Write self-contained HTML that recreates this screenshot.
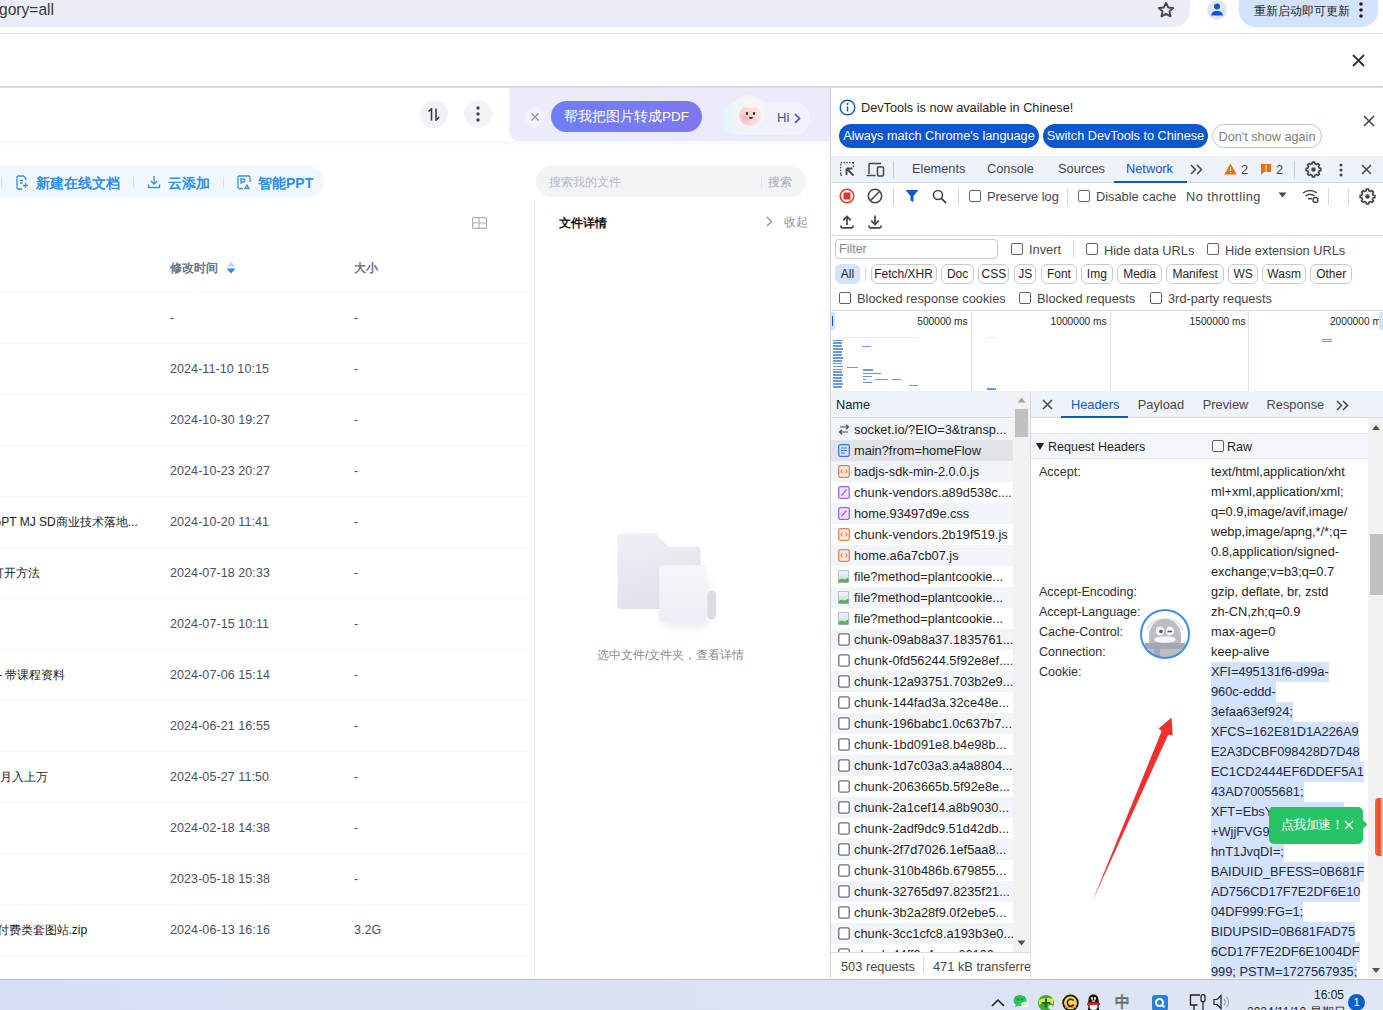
<!DOCTYPE html>
<html><head><meta charset="utf-8">
<style>
*{box-sizing:border-box;margin:0;padding:0}
html,body{width:1383px;height:1010px;overflow:hidden;background:#fff;font-family:"Liberation Sans",sans-serif;color:#1f1f1f}
.a{position:absolute}
.nw{white-space:nowrap}
/* chrome top */
#omni{left:-20px;top:-20px;width:1210px;height:47px;background:#eaedf7;border-radius:0 0 16px 0}
#upd{left:1239px;top:-20px;width:139px;height:47px;background:#d3e3fd;border-radius:0 0 16px 16px}
/* page */
.row-line{position:absolute;left:0;width:528px;height:1px;background:#f5f6f8}
.date{position:absolute;left:170px;font-size:12.5px;color:#4a5160;letter-spacing:0.08px}
.size{position:absolute;left:354px;font-size:12.5px;color:#4a5160;letter-spacing:0.08px}
.fname{position:absolute;left:0;font-size:12px;color:#222}
/* devtools */
.dt{font-size:12.5px;color:#1f1f1f}
.chk{position:absolute;width:12px;height:12px;border:1px solid #5f6368;border-radius:2px;background:#fff}
.sep{position:absolute;width:1px;background:#d4d9e1}
.chip{position:absolute;top:264px;height:20px;border:1px solid #c7c9cc;border-radius:6px;font-size:12px;line-height:18px;text-align:center;color:#1f1f1f}
.nrow{position:absolute;left:831px;width:182px;height:21px}
.nrow span{position:absolute;left:23px;top:3px;font-size:12.8px;white-space:nowrap;color:#1f1f1f}
.ico{position:absolute;left:7px;top:5px;width:11px;height:11px;border-radius:2px}
.hk{position:absolute;left:1039px;font-size:12.5px;color:#1f1f1f}
.hv{position:absolute;left:1211px;font-size:12.5px;color:#1f1f1f;white-space:nowrap}
.sel{background:#d3e3fd}
</style></head>
<body>
<!-- ===== CHROME TOP ===== -->
<div class="a" id="omni"></div>
<div class="a nw" style="left:-1px;top:1px;font-size:15.6px;color:#3a3a3a">gory=all</div>
<div class="a" id="upd"></div>
<div class="a" style="left:0;top:33px;width:1383px;height:1px;background:#dfe1e5"></div>
<div class="a" style="left:0;top:86px;width:1383px;height:3px;background:linear-gradient(#cfd0d3,#dcdde0 50%,#f3f3f5)"></div>
<!-- star -->
<svg class="a" style="left:1157px;top:1px" width="18" height="18" viewBox="0 0 24 24"><path d="M12 2.5l2.9 6.1 6.6.7-4.9 4.5 1.4 6.6L12 17.1l-6 3.3 1.4-6.6-4.9-4.5 6.6-.7z" fill="none" stroke="#474747" stroke-width="2.6" stroke-linejoin="round"/></svg>
<!-- profile -->
<div class="a" style="left:1207px;top:0px;width:20px;height:20px;border-radius:50%;background:#dde6f5"></div>
<svg class="a" style="left:1208px;top:1px" width="18" height="18" viewBox="0 0 18 18"><circle cx="9" cy="5.5" r="3" fill="#0b57d0"/><path d="M3.2 14.5c0-3 2.6-4.4 5.8-4.4s5.8 1.4 5.8 4.4z" fill="#0b57d0"/></svg>
<div class="a nw" style="left:1254px;top:3px;font-size:12px;color:#1f1f1f">重新启动即可更新</div>
<svg class="a" style="left:1357px;top:1px" width="8" height="18" viewBox="0 0 8 18"><circle cx="4" cy="3" r="1.8" fill="#1f1f1f"/><circle cx="4" cy="9" r="1.8" fill="#1f1f1f"/><circle cx="4" cy="15" r="1.8" fill="#1f1f1f"/></svg>
<svg class="a" style="left:1352px;top:54px" width="13" height="13" viewBox="0 0 13 13"><path d="M1 1L12 12M12 1L1 12" stroke="#333" stroke-width="1.8"/></svg>

<!-- ===== WEB PAGE ===== -->
<div class="a" style="left:0;top:88px;width:830px;height:890px;background:#fff;overflow:hidden">
 <!-- header purple panel -->
 <div class="a" style="left:509px;top:-10px;width:340px;height:63.5px;border-radius:0 0 0 12px;background:linear-gradient(90deg,#edecfd 0%,#ebeafc 50%,#ebebfc 100%)"></div>
 <div class="a" style="left:0;top:53px;width:830px;height:8px;background:linear-gradient(#f7f8fb,#fff)"></div>
 <!-- sort + more buttons -->
 <div class="a" style="left:420px;top:12px;width:28px;height:28px;border-radius:50%;background:#f1f2f6"></div>
 <svg class="a" style="left:427px;top:20px" width="14" height="13" viewBox="0 0 14 13"><path d="M1.5 3.5L4.5 0.8V12.5" fill="none" stroke="#3a3f4b" stroke-width="1.6"/><path d="M9 0.5V12.2L12.2 9" fill="none" stroke="#3a3f4b" stroke-width="1.6"/></svg>
 <div class="a" style="left:464px;top:12px;width:28px;height:28px;border-radius:50%;background:#f2f3f6"></div>
 <svg class="a" style="left:474px;top:16px" width="8" height="20" viewBox="0 0 8 20"><circle cx="4" cy="4" r="1.7" fill="#3b4250"/><circle cx="4" cy="10" r="1.7" fill="#3b4250"/><circle cx="4" cy="16" r="1.7" fill="#3b4250"/></svg>
 <!-- small x circle -->
 <div class="a" style="left:525px;top:19px;width:20px;height:20px;border-radius:50%;background:#f3f3fc"></div>
 <svg class="a" style="left:531px;top:25px" width="8" height="8" viewBox="0 0 8 8"><path d="M0.5 0.5L7.5 7.5M7.5 0.5L0.5 7.5" stroke="#8a8fa0" stroke-width="1.2"/></svg>
 <!-- purple button -->
 <div class="a" style="left:551px;top:13px;width:151px;height:31px;border-radius:16px;background:linear-gradient(90deg,#6f7ef7,#7f78f0)"></div>
 <div class="a nw" style="left:564px;top:20px;font-size:13.5px;color:#fff;font-weight:500">帮我把图片转成PDF</div>
 <!-- Hi pill -->
 <div class="a" style="left:722px;top:14px;width:88px;height:33px;border-radius:17px;background:linear-gradient(90deg,#e3f6fb 0%,#eef3fc 35%,#f3f1fd 100%)"></div>
 <div class="a" style="left:731px;top:7px;width:37px;height:38px;border-radius:50%;background:radial-gradient(circle at 50% 45%,#fafafa 0,#f3f3f5 60%,#e6e8f0 100%)"></div>
 <div class="a" style="left:739px;top:17px;width:22px;height:21px;border-radius:50%;background:radial-gradient(circle at 30% 60%,#f8b3bd 0,#fbd3d6 35%,#fde4e4 70%)"></div>
 <div class="a" style="left:742px;top:11px;width:17px;height:9px;border-radius:50%;background:#f6f6f8"></div>
 <div class="a" style="left:746px;top:24px;width:2px;height:3px;border-radius:1px;background:#222"></div>
 <div class="a" style="left:753px;top:24px;width:2px;height:3px;border-radius:1px;background:#222"></div>
 <div class="a" style="left:749px;top:29px;width:4px;height:2px;border-radius:0 0 2px 2px;background:#333"></div>
 <div class="a" style="left:742px;top:40px;width:17px;height:7px;border-radius:4px 4px 0 0;background:#f2f3f6"></div>
 <div class="a nw" style="left:777px;top:22px;font-size:13px;color:#3c49c4">Hi</div>
 <svg class="a" style="left:794px;top:25px" width="7" height="11" viewBox="0 0 7 11"><path d="M1 1l4.5 4.5L1 10" fill="none" stroke="#3c49c4" stroke-width="1.6"/></svg>

 <!-- toolbar pill -->
 <div class="a" style="left:-20px;top:78px;width:344px;height:32px;border-radius:16px;background:#f0f8fe"></div>
 <div class="a" style="left:1px;top:89px;width:1px;height:11px;background:#cfe3f3"></div>
 <div class="a" style="left:133px;top:89px;width:1px;height:11px;background:#cfe3f3"></div>
 <div class="a" style="left:223px;top:89px;width:1px;height:11px;background:#cfe3f3"></div>
 <svg class="a" style="left:16px;top:87px" width="13" height="15" viewBox="0 0 13 15"><path d="M10 5V3.5L7.5 1H2.2C1.5 1 1 1.5 1 2.2v10.6c0 .7.5 1.2 1.2 1.2H6" fill="none" stroke="#3a8fe0" stroke-width="1.3"/><path d="M4 5.5h3M4 8h2.5M9.5 8v5M7 10.5h5" stroke="#3a8fe0" stroke-width="1.3" fill="none"/></svg>
 <div class="a nw" style="left:36px;top:87px;font-size:14px;font-weight:bold;color:#2e8ee6">新建在线文档</div>
 <svg class="a" style="left:147px;top:87px" width="14" height="14" viewBox="0 0 14 14"><path d="M7 1v8M3.8 6L7 9.2 10.2 6M1.5 9.5v3h11v-3" fill="none" stroke="#3a8fe0" stroke-width="1.3"/></svg>
 <div class="a nw" style="left:168px;top:87px;font-size:14px;font-weight:bold;color:#2e8ee6">云添加</div>
 <svg class="a" style="left:237px;top:87px" width="14" height="15" viewBox="0 0 14 15"><path d="M6 13.5H2.2c-.7 0-1.2-.5-1.2-1.2V2.2C1 1.5 1.5 1 2.2 1h9.6c.7 0 1.2.5 1.2 1.2V7" fill="none" stroke="#3a8fe0" stroke-width="1.3"/><path d="M4 9V4h2.5a1.5 1.5 0 010 3H4M8 13.5l2-3.5 2 3.5z" fill="none" stroke="#3a8fe0" stroke-width="1.3"/></svg>
 <div class="a nw" style="left:258px;top:87px;font-size:14px;font-weight:bold;color:#2e8ee6">智能PPT</div>

 <!-- search pill -->
 <div class="a" style="left:536px;top:78px;width:270px;height:31px;border-radius:16px;background:#f2f3f7"></div>
 <div class="a nw" style="left:549px;top:86px;font-size:12px;color:#b6bac4">搜索我的文件</div>
 <div class="a" style="left:761px;top:87px;width:1px;height:13px;background:#e2e4ea"></div>
 <div class="a nw" style="left:768px;top:86px;font-size:12px;color:#a8adb8">搜索</div>

 <!-- grid icon -->
 <svg class="a" style="left:472px;top:129px" width="15" height="12" viewBox="0 0 15 12"><rect x="0.6" y="0.6" width="13.8" height="10.8" rx="1" fill="none" stroke="#aab0bb" stroke-width="1.2"/><path d="M0.6 6h13.8M7 0.6v10.8" stroke="#aab0bb" stroke-width="1.2"/></svg>

 <!-- detail panel -->
 <div class="a" style="left:534px;top:112px;width:1px;height:778px;background:#eef0f3"></div>
 <div class="a nw" style="left:559px;top:127px;font-size:12px;font-weight:bold;color:#111">文件详情</div>
 <svg class="a" style="left:766px;top:128px" width="7" height="11" viewBox="0 0 7 11"><path d="M1 1l4.5 4.5L1 10" fill="none" stroke="#8c919c" stroke-width="1.2"/></svg>
 <div class="a nw" style="left:784px;top:126px;font-size:12px;color:#8c919c">收起</div>
 <!-- empty folder illustration -->
 <svg class="a" style="left:600px;top:435px" width="130" height="110" viewBox="600 523 130 110">
  <defs>
   <linearGradient id="fb" x1="0" y1="0" x2="0.3" y2="1"><stop offset="0" stop-color="#eef0f5"/><stop offset="1" stop-color="#dfe2ea"/></linearGradient>
   <linearGradient id="ff" x1="0" y1="0" x2="0" y2="1"><stop offset="0" stop-color="#f5f6fa"/><stop offset="1" stop-color="#eceef5"/></linearGradient>
   <filter id="sh" x="-50%" y="-50%" width="200%" height="200%"><feGaussianBlur stdDeviation="4"/></filter>
  </defs>
  <path d="M621.5 533.4H655.5L668.5 546.7H696.6Q700.6 546.7 700.6 550.7V605Q700.6 609 696.6 609H621.5Q617.5 609 617.5 605V537.4Q617.5 533.4 621.5 533.4z" fill="url(#fb)"/>
  <rect x="707.3" y="590.5" width="9" height="29" rx="4.5" fill="#dcdee5"/>
  <rect x="662" y="574" width="46" height="54" rx="6" fill="#c8ccd8" opacity="0.35" filter="url(#sh)"/>
  <rect x="659" y="565.3" width="47.5" height="57" rx="4" fill="url(#ff)"/>
 </svg>
 <div class="a nw" style="left:597px;top:559px;font-size:12px;color:#878c97">选中文件/文件夹，查看详情</div>

 <!-- table header -->
 <div class="a nw" style="left:170px;top:172px;font-size:12px;font-weight:bold;color:#6b7280">修改时间</div>
 <svg class="a" style="left:226px;top:173px" width="10" height="13" viewBox="0 0 10 13"><path d="M5 0.5L9.5 5.5H0.5z" fill="#c9d9f0"/><path d="M5 12.5L9.5 7.5H0.5z" fill="#1e8ef0"/></svg>
 <div class="a nw" style="left:354px;top:172px;font-size:12px;font-weight:bold;color:#6b7280">大小</div>
 <div class="row-line" style="top:204px"></div>
 <div class="date nw" style="top:223px">-</div>
 <div class="size nw" style="top:223px">-</div>
 <div class="row-line" style="top:255px"></div>
 <div class="date nw" style="top:274px">2024-11-10 10:15</div>
 <div class="size nw" style="top:274px">-</div>
 <div class="row-line" style="top:306px"></div>
 <div class="date nw" style="top:325px">2024-10-30 19:27</div>
 <div class="size nw" style="top:325px">-</div>
 <div class="row-line" style="top:357px"></div>
 <div class="date nw" style="top:376px">2024-10-23 20:27</div>
 <div class="size nw" style="top:376px">-</div>
 <div class="row-line" style="top:408px"></div>
 <div class="date nw" style="top:427px">2024-10-20 11:41</div>
 <div class="size nw" style="top:427px">-</div>
 <div class="fname nw" style="left:-8px;top:426px">GPT MJ SD商业技术落地...</div>
 <div class="row-line" style="top:459px"></div>
 <div class="date nw" style="top:478px">2024-07-18 20:33</div>
 <div class="size nw" style="top:478px">-</div>
 <div class="fname nw" style="left:-8px;top:477px">打开方法</div>
 <div class="row-line" style="top:510px"></div>
 <div class="date nw" style="top:529px">2024-07-15 10:11</div>
 <div class="size nw" style="top:529px">-</div>
 <div class="row-line" style="top:561px"></div>
 <div class="date nw" style="top:580px">2024-07-06 15:14</div>
 <div class="size nw" style="top:580px">-</div>
 <div class="fname nw" style="left:-2px;top:579px">- 带课程资料</div>
 <div class="row-line" style="top:612px"></div>
 <div class="date nw" style="top:631px">2024-06-21 16:55</div>
 <div class="size nw" style="top:631px">-</div>
 <div class="row-line" style="top:663px"></div>
 <div class="date nw" style="top:682px">2024-05-27 11:50</div>
 <div class="size nw" style="top:682px">-</div>
 <div class="fname nw" style="left:0px;top:681px">月入上万</div>
 <div class="row-line" style="top:714px"></div>
 <div class="date nw" style="top:733px">2024-02-18 14:38</div>
 <div class="size nw" style="top:733px">-</div>
 <div class="row-line" style="top:765px"></div>
 <div class="date nw" style="top:784px">2023-05-18 15:38</div>
 <div class="size nw" style="top:784px">-</div>
 <div class="row-line" style="top:816px"></div>
 <div class="date nw" style="top:835px">2024-06-13 16:16</div>
 <div class="size nw" style="top:835px">3.2G</div>
 <div class="fname nw" style="left:-3.5px;top:834px">付费类套图站.zip</div>
 <div class="row-line" style="top:867px"></div>
</div>
<div class="a" style="left:826px;top:142px;width:4px;height:836px;background:#fbfcfd"></div>

<!-- ===== DEVTOOLS ===== -->
<div class="a" style="left:830px;top:88px;width:553px;height:890px;background:#fff;overflow:hidden">
 <div class="a" style="left:0;top:0;width:1px;height:890px;background:#cfd3da"></div>
 <!-- infobar -->
 <svg class="a" style="left:9px;top:11px" width="17" height="17" viewBox="0 0 17 17"><circle cx="8.5" cy="8.5" r="7.3" fill="none" stroke="#0b57d0" stroke-width="1.4"/><circle cx="8.5" cy="5" r="1" fill="#0b57d0"/><path d="M8.5 7.3v5.2" stroke="#0b57d0" stroke-width="1.5"/></svg>
 <div class="a nw dt" style="left:31px;top:12.5px;font-size:12.7px">DevTools is now available in Chinese!</div>
 <div class="a nw" style="left:9px;top:36px;width:200px;height:24px;border-radius:12px;background:#0b57d0;color:#fff;font-size:12.7px;line-height:25px;text-align:center">Always match Chrome's language</div>
 <div class="a nw" style="left:213px;top:36px;width:165px;height:24px;border-radius:12px;background:#0b57d0;color:#fff;font-size:12.7px;line-height:25px;text-align:center">Switch DevTools to Chinese</div>
 <div class="a nw" style="left:382px;top:36px;width:110px;height:24px;border-radius:12px;border:1px solid #b4c6ea;color:#7b7f85;font-size:12.7px;line-height:24px;text-align:center">Don't show again</div>
 <svg class="a" style="left:533px;top:27px" width="12" height="12" viewBox="0 0 12 12"><path d="M1 1L11 11M11 1L1 11" stroke="#474747" stroke-width="1.6"/></svg>
 <!-- tab bar -->
 <div class="a" style="left:1px;top:68px;width:552px;height:27px;background:#eef2f9;border-bottom:1px solid #d3dbe7"></div>
 <svg class="a" style="left:10px;top:74px" width="15" height="15" viewBox="0 0 15 15"><path d="M0.7 0.7h1.4M3.5 0.7h1.4M6.3 0.7h1.4M9.1 0.7h1.4M11.9 0.7h1.4v1.4M13.3 3.5v1.4M0.7 2.1v1.4M0.7 4.9v1.4M0.7 7.7v1.4M0.7 10.5v1.4M0.7 13.3h1.4M0.7 13.3v-1" stroke="#474747" stroke-width="1.3" fill="none"/><path d="M6.5 6.5l7 7M6.5 6.5v6.5M6.5 6.5h6" stroke="#474747" stroke-width="1.8" fill="none"/></svg>
 <svg class="a" style="left:36px;top:74px" width="19" height="16" viewBox="0 0 19 16"><path d="M3 12V2.5c0-.6.4-1 1-1h11" fill="none" stroke="#474747" stroke-width="1.5"/><path d="M0.5 13.5h9" stroke="#474747" stroke-width="1.5"/><rect x="11.5" y="5" width="6" height="9" rx="1" fill="none" stroke="#474747" stroke-width="1.5"/></svg>
 <div class="a" style="left:63px;top:73px;width:1px;height:17px;background:#c7ccd4"></div>
 <div class="a nw dt" style="left:82px;top:73px;font-size:12.8px;color:#474747">Elements</div>
 <div class="a nw dt" style="left:157px;top:73px;font-size:12.8px;color:#474747">Console</div>
 <div class="a nw dt" style="left:228px;top:73px;font-size:12.8px;color:#474747">Sources</div>
 <div class="a nw dt" style="left:296px;top:73px;font-size:12.8px;color:#0b57d0">Network</div>
 <div class="a" style="left:284px;top:93px;width:73px;height:2px;background:#0b57d0"></div>
 <svg class="a" style="left:360px;top:76px" width="13" height="11" viewBox="0 0 13 11"><path d="M1 1l4.5 4.5L1 10M7 1l4.5 4.5L7 10" fill="none" stroke="#474747" stroke-width="1.5"/></svg>
 <svg class="a" style="left:394px;top:75px" width="13" height="12" viewBox="0 0 13 12"><path d="M6.5 0.5L12.7 11.5H0.3z" fill="#e8710a"/><path d="M6.5 4v4" stroke="#fff" stroke-width="1.3"/><circle cx="6.5" cy="9.6" r="0.7" fill="#fff"/></svg>
 <div class="a nw dt" style="left:411px;top:74px;font-size:12.8px;color:#474747">2</div>
 <svg class="a" style="left:430px;top:75px" width="12" height="13" viewBox="0 0 12 13"><path d="M1 1h10v8H4l-3 3z" fill="#e8710a"/><path d="M6 2.5v4" stroke="#fff" stroke-width="1.3"/><circle cx="6" cy="8" r="0.7" fill="#fff"/></svg>
 <div class="a nw dt" style="left:446px;top:74px;font-size:12.8px;color:#474747">2</div>
 <div class="a" style="left:464px;top:73px;width:1px;height:17px;background:#c7ccd4"></div>
 <svg class="a" style="left:475px;top:73px" width="17" height="17" viewBox="0 0 24 24"><path d="M22.37 10.36 L22.37 13.64 L19.97 13.91 L18.99 16.28 L20.49 18.17 L18.17 20.49 L16.28 18.99 L13.91 19.97 L13.64 22.37 L10.36 22.37 L10.09 19.97 L7.72 18.99 L5.83 20.49 L3.51 18.17 L5.01 16.28 L4.03 13.91 L1.63 13.64 L1.63 10.36 L4.03 10.09 L5.01 7.72 L3.51 5.83 L5.83 3.51 L7.72 5.01 L10.09 4.03 L10.36 1.63 L13.64 1.63 L13.91 4.03 L16.28 5.01 L18.17 3.51 L20.49 5.83 L18.99 7.72 L19.97 10.09Z" fill="none" stroke="#474747" stroke-width="2.3" stroke-linejoin="round"/><circle cx="12" cy="12" r="3.2" fill="#474747"/></svg>
 <svg class="a" style="left:508px;top:74px" width="6" height="16" viewBox="0 0 6 16"><circle cx="3" cy="3" r="1.5" fill="#474747"/><circle cx="3" cy="8" r="1.5" fill="#474747"/><circle cx="3" cy="13" r="1.5" fill="#474747"/></svg>
 <svg class="a" style="left:531px;top:76px" width="11" height="11" viewBox="0 0 11 11"><path d="M1 1L10 10M10 1L1 10" stroke="#474747" stroke-width="1.5"/></svg>
 <!-- network toolbar row 1 -->
 <svg class="a" style="left:9px;top:100px" width="16" height="16" viewBox="0 0 16 16"><circle cx="8" cy="8" r="6.8" fill="none" stroke="#dc362e" stroke-width="1.5"/><rect x="4.5" y="4.5" width="7" height="7" rx="0.5" fill="#dc362e"/></svg>
 <svg class="a" style="left:37px;top:100px" width="16" height="16" viewBox="0 0 16 16"><circle cx="8" cy="8" r="6.7" fill="none" stroke="#474747" stroke-width="1.6"/><path d="M3.3 12.7L12.7 3.3" stroke="#474747" stroke-width="1.6"/></svg>
 <div class="a" style="left:63px;top:100px;width:1px;height:17px;background:#d4d9e1"></div>
 <svg class="a" style="left:75px;top:101px" width="14" height="14" viewBox="0 0 14 14"><path d="M0.5 1h13L8.5 7v6l-3-1.5V7z" fill="#0b57d0"/></svg>
 <svg class="a" style="left:102px;top:101px" width="15" height="15" viewBox="0 0 15 15"><circle cx="6" cy="6" r="4.5" fill="none" stroke="#474747" stroke-width="1.6"/><path d="M9.3 9.3L14 14" stroke="#474747" stroke-width="1.8"/></svg>
 <div class="a" style="left:128px;top:100px;width:1px;height:17px;background:#d4d9e1"></div>
 <div class="chk" style="left:139px;top:102px"></div>
 <div class="a nw dt" style="left:157px;top:101px;font-size:12.8px;color:#474747">Preserve log</div>
 <div class="a" style="left:237px;top:100px;width:1px;height:17px;background:#d4d9e1"></div>
 <div class="chk" style="left:248px;top:102px"></div>
 <div class="a nw dt" style="left:266px;top:101px;font-size:12.8px;color:#474747">Disable cache</div>
 <div class="a nw dt" style="left:356px;top:101px;font-size:12.8px;color:#474747;letter-spacing:0.45px">No throttling</div>
 <svg class="a" style="left:448px;top:104px" width="9" height="6" viewBox="0 0 9 6"><path d="M0.5 0.5h8L4.5 5.5z" fill="#474747"/></svg>
 <svg class="a" style="left:472px;top:100px" width="18" height="16" viewBox="0 0 18 16"><path d="M1 5a11 11 0 0114 0M3.5 8a7.5 7.5 0 019 0M6 11a4 4 0 014 0" fill="none" stroke="#474747" stroke-width="1.5"/><circle cx="13.5" cy="12" r="2.5" fill="none" stroke="#474747" stroke-width="1.4"/></svg>
 <div class="a" style="left:498px;top:100px;width:1px;height:17px;background:#d4d9e1"></div>
 <div class="a" style="left:518px;top:100px;width:1px;height:17px;background:#d4d9e1"></div>
 <svg class="a" style="left:529px;top:100px" width="17" height="17" viewBox="0 0 24 24"><path d="M22.37 10.36 L22.37 13.64 L19.97 13.91 L18.99 16.28 L20.49 18.17 L18.17 20.49 L16.28 18.99 L13.91 19.97 L13.64 22.37 L10.36 22.37 L10.09 19.97 L7.72 18.99 L5.83 20.49 L3.51 18.17 L5.01 16.28 L4.03 13.91 L1.63 13.64 L1.63 10.36 L4.03 10.09 L5.01 7.72 L3.51 5.83 L5.83 3.51 L7.72 5.01 L10.09 4.03 L10.36 1.63 L13.64 1.63 L13.91 4.03 L16.28 5.01 L18.17 3.51 L20.49 5.83 L18.99 7.72 L19.97 10.09Z" fill="none" stroke="#474747" stroke-width="2.3" stroke-linejoin="round"/><circle cx="12" cy="12" r="3.2" fill="#474747"/></svg>
 <!-- network toolbar row 2 -->
 <svg class="a" style="left:10px;top:127px" width="14" height="14" viewBox="0 0 14 14"><path d="M7 10V1.5M3.2 5.3L7 1.5l3.8 3.8M1 10.5v1c0 .8.5 1.3 1.3 1.3h9.4c.8 0 1.3-.5 1.3-1.3v-1" fill="none" stroke="#474747" stroke-width="1.7"/></svg>
 <svg class="a" style="left:38px;top:127px" width="14" height="14" viewBox="0 0 14 14"><path d="M7 0.5V9.5M3.2 5.7L7 9.5l3.8-3.8M1 10.5v1c0 .8.5 1.3 1.3 1.3h9.4c.8 0 1.3-.5 1.3-1.3v-1" fill="none" stroke="#474747" stroke-width="1.7"/></svg>
 <div class="a" style="left:1px;top:147px;width:552px;height:1px;background:#d3dbe7"></div>
 <!-- filter row -->
 <div class="a" style="left:5px;top:151px;width:163px;height:20px;border:1px solid #c7c9cc;border-radius:4px"></div>
 <div class="a nw" style="left:9px;top:154px;font-size:12.5px;color:#80868b">Filter</div>
 <div class="chk" style="left:181px;top:155px"></div>
 <div class="a nw dt" style="left:199px;top:154px;font-size:12.8px;color:#474747">Invert</div>
 <div class="a" style="left:243px;top:152px;width:1px;height:17px;background:#d4d9e1"></div>
 <div class="chk" style="left:256px;top:155px"></div>
 <div class="a nw dt" style="left:274px;top:154.5px;font-size:12.8px;color:#474747">Hide data URLs</div>
 <div class="chk" style="left:377px;top:155px"></div>
 <div class="a nw dt" style="left:395px;top:154.5px;font-size:12.8px;color:#474747">Hide extension URLs</div>
 <!-- chips -->
 <div class="chip" style="left:5px;width:25px;border-color:#d3e3fd;background:#d3e3fd;top:176px">All</div>
 <div class="a" style="left:35px;top:179px;width:1px;height:14px;background:#d4d9e1"></div>
 <div class="chip" style="left:40.5px;width:66.0px;top:176px">Fetch/XHR</div>
 <div class="chip" style="left:111.4px;width:32.4px;top:176px">Doc</div>
 <div class="chip" style="left:148.4px;width:31.0px;top:176px">CSS</div>
 <div class="chip" style="left:184.2px;width:22.3px;top:176px">JS</div>
 <div class="chip" style="left:211.2px;width:35.4px;top:176px">Font</div>
 <div class="chip" style="left:251.0px;width:31.7px;top:176px">Img</div>
 <div class="chip" style="left:287.0px;width:45.0px;top:176px">Media</div>
 <div class="chip" style="left:336.3px;width:57.7px;top:176px">Manifest</div>
 <div class="chip" style="left:398.3px;width:29.7px;top:176px">WS</div>
 <div class="chip" style="left:432.3px;width:43.7px;top:176px">Wasm</div>
 <div class="chip" style="left:480.3px;width:41.7px;top:176px">Other</div>
 <!-- blocked row -->
 <div class="chk" style="left:9px;top:204px"></div>
 <div class="a nw dt" style="left:27px;top:203px;font-size:12.8px;color:#474747">Blocked response cookies</div>
 <div class="chk" style="left:189px;top:204px"></div>
 <div class="a nw dt" style="left:207px;top:203px;font-size:12.8px;color:#474747">Blocked requests</div>
 <div class="chk" style="left:320px;top:204px"></div>
 <div class="a nw dt" style="left:338px;top:203px;font-size:12.8px;color:#474747">3rd-party requests</div>
 <div class="a" style="left:1px;top:222px;width:552px;height:1px;background:#d3dbe7"></div>
 <div class="a" style="left:141px;top:223px;width:1px;height:80px;background:#dde3ec"></div>
 <div class="a" style="left:280px;top:223px;width:1px;height:80px;background:#dde3ec"></div>
 <div class="a" style="left:418px;top:223px;width:1px;height:80px;background:#dde3ec"></div>
 <div class="a nw" style="left:17.7px;width:120px;top:228px;text-align:right;font-size:10.2px;color:#1f1f1f">500000 ms</div>
 <div class="a nw" style="left:156.7px;width:120px;top:228px;text-align:right;font-size:10.2px;color:#1f1f1f">1000000 ms</div>
 <div class="a nw" style="left:295.7px;width:120px;top:228px;text-align:right;font-size:10.2px;color:#1f1f1f">1500000 ms</div>
 <div class="a nw" style="left:436.0px;width:120px;top:228px;text-align:right;font-size:10.2px;color:#1f1f1f">2000000 ms</div>
 <div class="a" style="left:1px;top:224px;width:4px;height:18px;background:#d3e3fd;border-radius:0 2px 2px 0"></div><div class="a" style="left:2px;top:228px;width:1px;height:10px;background:#0b57d0"></div>
 <div class="a" style="left:549px;top:224px;width:4px;height:18px;background:#d3e3fd;border-radius:2px 0 0 2px"></div>
 <div class="a" style="left:3.0px;top:251.5px;width:9.5px;height:1.8px;background:#6a97e6"></div>
 <div class="a" style="left:3.0px;top:254.4px;width:8.5px;height:1.8px;background:#6a97e6"></div>
 <div class="a" style="left:3.0px;top:257.3px;width:8.5px;height:1.8px;background:#6a97e6"></div>
 <div class="a" style="left:3.0px;top:260.2px;width:9.5px;height:1.8px;background:#6a97e6"></div>
 <div class="a" style="left:3.0px;top:263.1px;width:8.5px;height:1.8px;background:#6a97e6"></div>
 <div class="a" style="left:3.0px;top:266.0px;width:8.5px;height:1.8px;background:#6a97e6"></div>
 <div class="a" style="left:3.0px;top:268.9px;width:9.5px;height:1.8px;background:#6a97e6"></div>
 <div class="a" style="left:3.0px;top:271.8px;width:8.5px;height:1.8px;background:#6a97e6"></div>
 <div class="a" style="left:3.0px;top:274.7px;width:8.5px;height:1.8px;background:#6a97e6"></div>
 <div class="a" style="left:3.0px;top:277.6px;width:9.5px;height:1.8px;background:#6a97e6"></div>
 <div class="a" style="left:3.0px;top:280.5px;width:8.5px;height:1.8px;background:#6a97e6"></div>
 <div class="a" style="left:3.0px;top:283.4px;width:8.5px;height:1.8px;background:#6a97e6"></div>
 <div class="a" style="left:3.0px;top:286.3px;width:9.5px;height:1.8px;background:#6a97e6"></div>
 <div class="a" style="left:3.0px;top:289.2px;width:8.5px;height:1.8px;background:#6a97e6"></div>
 <div class="a" style="left:3.0px;top:292.1px;width:8.5px;height:1.8px;background:#6a97e6"></div>
 <div class="a" style="left:3.0px;top:295.0px;width:9.5px;height:1.8px;background:#6a97e6"></div>
 <div class="a" style="left:3.0px;top:297.9px;width:8.5px;height:1.8px;background:#6a97e6"></div>
 <div class="a" style="left:31.8px;top:257.5px;width:9px;height:1.8px;background:#6a97e6"></div>
 <div class="a" style="left:17.0px;top:278.8px;width:11px;height:1.6px;background:#6a97e6"></div>
 <div class="a" style="left:33.0px;top:281.3px;width:9.5px;height:1.6px;background:#6a97e6"></div>
 <div class="a" style="left:33.0px;top:284.5px;width:18px;height:1.9px;background:#6a97e6"></div>
 <div class="a" style="left:33.0px;top:287.6px;width:9px;height:1.2px;background:#6a97e6"></div>
 <div class="a" style="left:33.0px;top:290.6px;width:3px;height:1.6px;background:#6a97e6"></div>
 <div class="a" style="left:45.0px;top:290.6px;width:13px;height:1.8px;background:#6a97e6"></div>
 <div class="a" style="left:62.0px;top:290.6px;width:9px;height:1.8px;background:#6a97e6"></div>
 <div class="a" style="left:33.0px;top:294.0px;width:9px;height:1.4px;background:#6a97e6"></div>
 <div class="a" style="left:78.5px;top:296.5px;width:9.5px;height:1.9px;background:#6a97e6"></div>
 <div class="a" style="left:156.5px;top:300.3px;width:9px;height:1.6px;background:#6a97e6"></div>
 <div class="a" style="left:491.5px;top:250.8px;width:10px;height:1.3px;background:#6a97e6"></div>
 <div class="a" style="left:491.5px;top:253.0px;width:10px;height:1.3px;background:#6a97e6"></div>
 <div class="a" style="left:13.0px;top:249.0px;width:75px;height:1.2px;background:#e6e8ee"></div>
 <div class="a" style="left:156.5px;top:249.0px;width:9px;height:1.2px;background:#e6e8ee"></div>
 <div class="a" style="left:1px;top:303px;width:552px;height:1px;background:#d3dbe7"></div>
 <div class="a" style="left:1px;top:303px;width:182px;height:27px;background:#eef2f9;border-bottom:1px solid #d3dbe7"></div>
 <div class="a nw dt" style="left:6px;top:309px;font-size:12.8px">Name</div>
 <div class="a" style="left:1px;top:330px;width:182px;height:535px;background:#fff"></div>
 <div class="a" style="left:1px;top:330.5px;width:182px;height:21px;background:#f1f4f9;overflow:hidden"><svg class="a" style="left:7px;top:5px" width="12" height="11" viewBox="0 0 12 11"><path d="M2 3h8.5M8 0.8L10.5 3 8 5.2M10 8H1.5M4 5.8L1.5 8 4 10.2" fill="none" stroke="#474747" stroke-width="1.2"/></svg><span class="a nw" style="left:23px;top:3.5px;font-size:12.8px;color:#1f1f1f">socket.io/?EIO=3&amp;transp...</span></div>
 <div class="a" style="left:1px;top:351.5px;width:182px;height:21px;background:#e1e3e7;overflow:hidden"><svg class="a" style="left:7px;top:4px" width="12" height="13" viewBox="0 0 12 13"><rect x="0.7" y="0.7" width="10.6" height="11.6" rx="1.5" fill="#d3e3fd" stroke="#3b78e7" stroke-width="1.3"/><path d="M3 4h6M3 6.5h6M3 9h4" stroke="#3b78e7" stroke-width="1.2"/></svg><span class="a nw" style="left:23px;top:3.5px;font-size:12.8px;color:#1f1f1f">main?from=homeFlow</span></div>
 <div class="a" style="left:1px;top:372.5px;width:182px;height:21px;background:#f1f4f9;overflow:hidden"><svg class="a" style="left:7px;top:4px" width="12" height="13" viewBox="0 0 12 13"><rect x="0.7" y="0.7" width="10.6" height="11.6" rx="1.5" fill="#fde7dc" stroke="#e8825a" stroke-width="1.3"/><path d="M4.5 4.5L3 6.5l1.5 2M7.5 4.5L9 6.5l-1.5 2" fill="none" stroke="#e8825a" stroke-width="1.1"/></svg><span class="a nw" style="left:23px;top:3.5px;font-size:12.8px;color:#1f1f1f">badjs-sdk-min-2.0.0.js</span></div>
 <div class="a" style="left:1px;top:393.5px;width:182px;height:21px;background:#ffffff;overflow:hidden"><svg class="a" style="left:7px;top:4px" width="12" height="13" viewBox="0 0 12 13"><rect x="0.7" y="0.7" width="10.6" height="11.6" rx="1.5" fill="#efe3fb" stroke="#a263e0" stroke-width="1.3"/><path d="M3.5 9.5L8.5 3.5" stroke="#a263e0" stroke-width="1.2"/></svg><span class="a nw" style="left:23px;top:3.5px;font-size:12.8px;color:#1f1f1f">chunk-vendors.a89d538c....</span></div>
 <div class="a" style="left:1px;top:414.5px;width:182px;height:21px;background:#f1f4f9;overflow:hidden"><svg class="a" style="left:7px;top:4px" width="12" height="13" viewBox="0 0 12 13"><rect x="0.7" y="0.7" width="10.6" height="11.6" rx="1.5" fill="#efe3fb" stroke="#a263e0" stroke-width="1.3"/><path d="M3.5 9.5L8.5 3.5" stroke="#a263e0" stroke-width="1.2"/></svg><span class="a nw" style="left:23px;top:3.5px;font-size:12.8px;color:#1f1f1f">home.93497d9e.css</span></div>
 <div class="a" style="left:1px;top:435.5px;width:182px;height:21px;background:#ffffff;overflow:hidden"><svg class="a" style="left:7px;top:4px" width="12" height="13" viewBox="0 0 12 13"><rect x="0.7" y="0.7" width="10.6" height="11.6" rx="1.5" fill="#fde7dc" stroke="#e8825a" stroke-width="1.3"/><path d="M4.5 4.5L3 6.5l1.5 2M7.5 4.5L9 6.5l-1.5 2" fill="none" stroke="#e8825a" stroke-width="1.1"/></svg><span class="a nw" style="left:23px;top:3.5px;font-size:12.8px;color:#1f1f1f">chunk-vendors.2b19f519.js</span></div>
 <div class="a" style="left:1px;top:456.5px;width:182px;height:21px;background:#f1f4f9;overflow:hidden"><svg class="a" style="left:7px;top:4px" width="12" height="13" viewBox="0 0 12 13"><rect x="0.7" y="0.7" width="10.6" height="11.6" rx="1.5" fill="#fde7dc" stroke="#e8825a" stroke-width="1.3"/><path d="M4.5 4.5L3 6.5l1.5 2M7.5 4.5L9 6.5l-1.5 2" fill="none" stroke="#e8825a" stroke-width="1.1"/></svg><span class="a nw" style="left:23px;top:3.5px;font-size:12.8px;color:#1f1f1f">home.a6a7cb07.js</span></div>
 <div class="a" style="left:1px;top:477.5px;width:182px;height:21px;background:#ffffff;overflow:hidden"><svg class="a" style="left:7px;top:4px" width="12" height="13" viewBox="0 0 12 13"><defs><linearGradient id="ig" x1="0" y1="0" x2="0" y2="1"><stop offset="0" stop-color="#f2f5f9"/><stop offset="1" stop-color="#c9d6e6"/></linearGradient></defs><rect x="0.5" y="0.5" width="10" height="12" fill="url(#ig)" stroke="#aab4c0" stroke-width="0.8"/><path d="M0.5 12.5V10l3-1.5 3 1 4-2v5z" fill="#5fae5f"/></svg><span class="a nw" style="left:23px;top:3.5px;font-size:12.8px;color:#1f1f1f">file?method=plantcookie...</span></div>
 <div class="a" style="left:1px;top:498.5px;width:182px;height:21px;background:#f1f4f9;overflow:hidden"><svg class="a" style="left:7px;top:4px" width="12" height="13" viewBox="0 0 12 13"><defs><linearGradient id="ig" x1="0" y1="0" x2="0" y2="1"><stop offset="0" stop-color="#f2f5f9"/><stop offset="1" stop-color="#c9d6e6"/></linearGradient></defs><rect x="0.5" y="0.5" width="10" height="12" fill="url(#ig)" stroke="#aab4c0" stroke-width="0.8"/><path d="M0.5 12.5V10l3-1.5 3 1 4-2v5z" fill="#5fae5f"/></svg><span class="a nw" style="left:23px;top:3.5px;font-size:12.8px;color:#1f1f1f">file?method=plantcookie...</span></div>
 <div class="a" style="left:1px;top:519.5px;width:182px;height:21px;background:#ffffff;overflow:hidden"><svg class="a" style="left:7px;top:4px" width="12" height="13" viewBox="0 0 12 13"><defs><linearGradient id="ig" x1="0" y1="0" x2="0" y2="1"><stop offset="0" stop-color="#f2f5f9"/><stop offset="1" stop-color="#c9d6e6"/></linearGradient></defs><rect x="0.5" y="0.5" width="10" height="12" fill="url(#ig)" stroke="#aab4c0" stroke-width="0.8"/><path d="M0.5 12.5V10l3-1.5 3 1 4-2v5z" fill="#5fae5f"/></svg><span class="a nw" style="left:23px;top:3.5px;font-size:12.8px;color:#1f1f1f">file?method=plantcookie...</span></div>
 <div class="a" style="left:1px;top:540.5px;width:182px;height:21px;background:#f1f4f9;overflow:hidden"><svg class="a" style="left:7px;top:4px" width="12" height="13" viewBox="0 0 12 13"><rect x="0.8" y="0.8" width="10.4" height="11.4" rx="1.5" fill="#fff" stroke="#6b6f75" stroke-width="1.3"/></svg><span class="a nw" style="left:23px;top:3.5px;font-size:12.8px;color:#1f1f1f">chunk-09ab8a37.1835761...</span></div>
 <div class="a" style="left:1px;top:561.5px;width:182px;height:21px;background:#ffffff;overflow:hidden"><svg class="a" style="left:7px;top:4px" width="12" height="13" viewBox="0 0 12 13"><rect x="0.8" y="0.8" width="10.4" height="11.4" rx="1.5" fill="#fff" stroke="#6b6f75" stroke-width="1.3"/></svg><span class="a nw" style="left:23px;top:3.5px;font-size:12.8px;color:#1f1f1f">chunk-0fd56244.5f92e8ef....</span></div>
 <div class="a" style="left:1px;top:582.5px;width:182px;height:21px;background:#f1f4f9;overflow:hidden"><svg class="a" style="left:7px;top:4px" width="12" height="13" viewBox="0 0 12 13"><rect x="0.8" y="0.8" width="10.4" height="11.4" rx="1.5" fill="#fff" stroke="#6b6f75" stroke-width="1.3"/></svg><span class="a nw" style="left:23px;top:3.5px;font-size:12.8px;color:#1f1f1f">chunk-12a93751.703b2e9...</span></div>
 <div class="a" style="left:1px;top:603.5px;width:182px;height:21px;background:#ffffff;overflow:hidden"><svg class="a" style="left:7px;top:4px" width="12" height="13" viewBox="0 0 12 13"><rect x="0.8" y="0.8" width="10.4" height="11.4" rx="1.5" fill="#fff" stroke="#6b6f75" stroke-width="1.3"/></svg><span class="a nw" style="left:23px;top:3.5px;font-size:12.8px;color:#1f1f1f">chunk-144fad3a.32ce48e...</span></div>
 <div class="a" style="left:1px;top:624.5px;width:182px;height:21px;background:#f1f4f9;overflow:hidden"><svg class="a" style="left:7px;top:4px" width="12" height="13" viewBox="0 0 12 13"><rect x="0.8" y="0.8" width="10.4" height="11.4" rx="1.5" fill="#fff" stroke="#6b6f75" stroke-width="1.3"/></svg><span class="a nw" style="left:23px;top:3.5px;font-size:12.8px;color:#1f1f1f">chunk-196babc1.0c637b7...</span></div>
 <div class="a" style="left:1px;top:645.5px;width:182px;height:21px;background:#ffffff;overflow:hidden"><svg class="a" style="left:7px;top:4px" width="12" height="13" viewBox="0 0 12 13"><rect x="0.8" y="0.8" width="10.4" height="11.4" rx="1.5" fill="#fff" stroke="#6b6f75" stroke-width="1.3"/></svg><span class="a nw" style="left:23px;top:3.5px;font-size:12.8px;color:#1f1f1f">chunk-1bd091e8.b4e98b...</span></div>
 <div class="a" style="left:1px;top:666.5px;width:182px;height:21px;background:#f1f4f9;overflow:hidden"><svg class="a" style="left:7px;top:4px" width="12" height="13" viewBox="0 0 12 13"><rect x="0.8" y="0.8" width="10.4" height="11.4" rx="1.5" fill="#fff" stroke="#6b6f75" stroke-width="1.3"/></svg><span class="a nw" style="left:23px;top:3.5px;font-size:12.8px;color:#1f1f1f">chunk-1d7c03a3.a4a8804...</span></div>
 <div class="a" style="left:1px;top:687.5px;width:182px;height:21px;background:#ffffff;overflow:hidden"><svg class="a" style="left:7px;top:4px" width="12" height="13" viewBox="0 0 12 13"><rect x="0.8" y="0.8" width="10.4" height="11.4" rx="1.5" fill="#fff" stroke="#6b6f75" stroke-width="1.3"/></svg><span class="a nw" style="left:23px;top:3.5px;font-size:12.8px;color:#1f1f1f">chunk-2063665b.5f92e8e...</span></div>
 <div class="a" style="left:1px;top:708.5px;width:182px;height:21px;background:#f1f4f9;overflow:hidden"><svg class="a" style="left:7px;top:4px" width="12" height="13" viewBox="0 0 12 13"><rect x="0.8" y="0.8" width="10.4" height="11.4" rx="1.5" fill="#fff" stroke="#6b6f75" stroke-width="1.3"/></svg><span class="a nw" style="left:23px;top:3.5px;font-size:12.8px;color:#1f1f1f">chunk-2a1cef14.a8b9030...</span></div>
 <div class="a" style="left:1px;top:729.5px;width:182px;height:21px;background:#ffffff;overflow:hidden"><svg class="a" style="left:7px;top:4px" width="12" height="13" viewBox="0 0 12 13"><rect x="0.8" y="0.8" width="10.4" height="11.4" rx="1.5" fill="#fff" stroke="#6b6f75" stroke-width="1.3"/></svg><span class="a nw" style="left:23px;top:3.5px;font-size:12.8px;color:#1f1f1f">chunk-2adf9dc9.51d42db...</span></div>
 <div class="a" style="left:1px;top:750.5px;width:182px;height:21px;background:#f1f4f9;overflow:hidden"><svg class="a" style="left:7px;top:4px" width="12" height="13" viewBox="0 0 12 13"><rect x="0.8" y="0.8" width="10.4" height="11.4" rx="1.5" fill="#fff" stroke="#6b6f75" stroke-width="1.3"/></svg><span class="a nw" style="left:23px;top:3.5px;font-size:12.8px;color:#1f1f1f">chunk-2f7d7026.1ef5aa8...</span></div>
 <div class="a" style="left:1px;top:771.5px;width:182px;height:21px;background:#ffffff;overflow:hidden"><svg class="a" style="left:7px;top:4px" width="12" height="13" viewBox="0 0 12 13"><rect x="0.8" y="0.8" width="10.4" height="11.4" rx="1.5" fill="#fff" stroke="#6b6f75" stroke-width="1.3"/></svg><span class="a nw" style="left:23px;top:3.5px;font-size:12.8px;color:#1f1f1f">chunk-310b486b.679855...</span></div>
 <div class="a" style="left:1px;top:792.5px;width:182px;height:21px;background:#f1f4f9;overflow:hidden"><svg class="a" style="left:7px;top:4px" width="12" height="13" viewBox="0 0 12 13"><rect x="0.8" y="0.8" width="10.4" height="11.4" rx="1.5" fill="#fff" stroke="#6b6f75" stroke-width="1.3"/></svg><span class="a nw" style="left:23px;top:3.5px;font-size:12.8px;color:#1f1f1f">chunk-32765d97.8235f21...</span></div>
 <div class="a" style="left:1px;top:813.5px;width:182px;height:21px;background:#ffffff;overflow:hidden"><svg class="a" style="left:7px;top:4px" width="12" height="13" viewBox="0 0 12 13"><rect x="0.8" y="0.8" width="10.4" height="11.4" rx="1.5" fill="#fff" stroke="#6b6f75" stroke-width="1.3"/></svg><span class="a nw" style="left:23px;top:3.5px;font-size:12.8px;color:#1f1f1f">chunk-3b2a28f9.0f2ebe5...</span></div>
 <div class="a" style="left:1px;top:834.5px;width:182px;height:21px;background:#f1f4f9;overflow:hidden"><svg class="a" style="left:7px;top:4px" width="12" height="13" viewBox="0 0 12 13"><rect x="0.8" y="0.8" width="10.4" height="11.4" rx="1.5" fill="#fff" stroke="#6b6f75" stroke-width="1.3"/></svg><span class="a nw" style="left:23px;top:3.5px;font-size:12.8px;color:#1f1f1f">chunk-3cc1cfc8.a193b3e0...</span></div>
 <div class="a" style="left:1px;top:855.5px;width:182px;height:9px;background:#ffffff;overflow:hidden"><svg class="a" style="left:7px;top:4px" width="12" height="13" viewBox="0 0 12 13"><rect x="0.8" y="0.8" width="10.4" height="11.4" rx="1.5" fill="#fff" stroke="#6b6f75" stroke-width="1.3"/></svg><span class="a nw" style="left:23px;top:3.5px;font-size:12.8px;color:#1f1f1f">chunk-44ff9c4aac.60100...</span></div>
 <div class="a" style="left:183px;top:303px;width:17px;height:562px;background:#f1f1f1"></div>
 <svg class="a" style="left:187px;top:309px" width="9" height="6" viewBox="0 0 9 6"><path d="M0.5 5.5h8L4.5 0.5z" fill="#a3a3a3"/></svg>
 <div class="a" style="left:185px;top:321px;width:13px;height:28px;background:#c1c1c1"></div>
 <svg class="a" style="left:187px;top:852px" width="9" height="6" viewBox="0 0 9 6"><path d="M0.5 0.5h8L4.5 5.5z" fill="#505050"/></svg>
 <div class="a" style="left:1px;top:864px;width:200px;height:26px;background:#fff;border-top:1px solid #d3dbe7"></div>
 <div class="a nw dt" style="left:11px;top:871px;font-size:12.8px;color:#474747">503 requests</div>
 <div class="a" style="left:93px;top:869px;width:1px;height:16px;background:#d4d9e1"></div>
 <div class="a" style="left:103px;top:865px;width:97px;height:25px;overflow:hidden"><span class="a nw dt" style="left:0;top:6px;font-size:12.8px;color:#474747">471 kB transferred</span></div>
 <div class="a" style="left:200px;top:303px;width:1px;height:587px;background:#d3dbe7"></div>
 <div class="a" style="left:201px;top:303px;width:352px;height:27px;background:#eef2f9;border-bottom:1px solid #d3dbe7"></div>
 <svg class="a" style="left:212px;top:311px" width="11" height="11" viewBox="0 0 11 11"><path d="M1 1L10 10M10 1L1 10" stroke="#474747" stroke-width="1.5"/></svg>
 <div class="a nw dt" style="left:241.0px;top:309px;font-size:12.8px;color:#0b57d0">Headers</div>
 <div class="a nw dt" style="left:307.8px;top:309px;font-size:12.8px;color:#474747">Payload</div>
 <div class="a nw dt" style="left:372.8px;top:309px;font-size:12.8px;color:#474747">Preview</div>
 <div class="a nw dt" style="left:436.6px;top:309px;font-size:12.8px;color:#474747">Response</div>
 <div class="a" style="left:231px;top:328px;width:67px;height:2px;background:#0b57d0"></div>
 <svg class="a" style="left:506px;top:312px" width="13" height="11" viewBox="0 0 13 11"><path d="M1 1l4.5 4.5L1 10M7 1l4.5 4.5L7 10" fill="none" stroke="#474747" stroke-width="1.5"/></svg>
 <div class="a" style="left:201px;top:345px;width:337px;height:26px;background:#f3f5fa;border-top:1px solid #dde3ec;border-bottom:1px solid #dde3ec"></div>
 <svg class="a" style="left:206px;top:355px" width="8" height="7" viewBox="0 0 8 7"><path d="M0 0h8L4 7z" fill="#1f1f1f"/></svg>
 <div class="a nw dt" style="left:218px;top:352px;font-size:12.5px">Request Headers</div>
 <div class="chk" style="left:382px;top:352px"></div>
 <div class="a nw dt" style="left:397px;top:352px;font-size:12.5px">Raw</div>
 <div class="a nw dt" style="left:209px;top:376.5px;font-size:12.5px;color:#303030">Accept:</div>
 <div class="a nw dt" style="left:209px;top:496.5px;font-size:12.5px;color:#303030">Accept-Encoding:</div>
 <div class="a nw dt" style="left:209px;top:516.5px;font-size:12.5px;color:#303030">Accept-Language:</div>
 <div class="a nw dt" style="left:209px;top:536.5px;font-size:12.5px;color:#303030">Cache-Control:</div>
 <div class="a nw dt" style="left:209px;top:556.5px;font-size:12.5px;color:#303030">Connection:</div>
 <div class="a nw dt" style="left:209px;top:576.5px;font-size:12.5px;color:#303030">Cookie:</div>
 <div class="hv" style="left:381px;top:374.0px;height:20px;line-height:20px;font-size:12.8px">text/html,application/xht</div>
 <div class="hv" style="left:381px;top:394.0px;height:20px;line-height:20px;font-size:12.8px">ml+xml,application/xml;</div>
 <div class="hv" style="left:381px;top:414.0px;height:20px;line-height:20px;font-size:12.8px">q=0.9,image/avif,image/</div>
 <div class="hv" style="left:381px;top:434.0px;height:20px;line-height:20px;font-size:12.8px">webp,image/apng,*/*;q=</div>
 <div class="hv" style="left:381px;top:454.0px;height:20px;line-height:20px;font-size:12.8px">0.8,application/signed-</div>
 <div class="hv" style="left:381px;top:474.0px;height:20px;line-height:20px;font-size:12.8px">exchange;v=b3;q=0.7</div>
 <div class="hv" style="left:381px;top:494.0px;height:20px;line-height:20px;font-size:12.8px">gzip, deflate, br, zstd</div>
 <div class="hv" style="left:381px;top:514.0px;height:20px;line-height:20px;font-size:12.8px">zh-CN,zh;q=0.9</div>
 <div class="hv" style="left:381px;top:534.0px;height:20px;line-height:20px;font-size:12.8px">max-age=0</div>
 <div class="hv" style="left:381px;top:554.0px;height:20px;line-height:20px;font-size:12.8px">keep-alive</div>
 <div class="hv sel" style="left:381px;top:574.0px;height:20px;line-height:20px;font-size:12.8px;color:#1f2a44">XFI=495131f6-d99a-</div>
 <div class="hv sel" style="left:381px;top:594.0px;height:20px;line-height:20px;font-size:12.8px;color:#1f2a44">960c-eddd-</div>
 <div class="hv sel" style="left:381px;top:614.0px;height:20px;line-height:20px;font-size:12.8px;color:#1f2a44">3efaa63ef924;</div>
 <div class="hv sel" style="left:381px;top:634.0px;height:20px;line-height:20px;font-size:12.8px;color:#1f2a44">XFCS=162E81D1A226A9</div>
 <div class="hv sel" style="left:381px;top:654.0px;height:20px;line-height:20px;font-size:12.8px;color:#1f2a44">E2A3DCBF098428D7D48</div>
 <div class="hv sel" style="left:381px;top:674.0px;height:20px;line-height:20px;font-size:12.8px;color:#1f2a44">EC1CD2444EF6DDEF5A1</div>
 <div class="hv sel" style="left:381px;top:694.0px;height:20px;line-height:20px;font-size:12.8px;color:#1f2a44">43AD70055681;</div>
 <div class="hv sel" style="left:381px;top:714.0px;height:20px;line-height:20px;font-size:12.8px;color:#1f2a44">XFT=EbsYl5rn8aBJ2Jv</div>
 <div class="hv sel" style="left:381px;top:734.0px;height:20px;line-height:20px;font-size:12.8px;color:#1f2a44">+WjjFVG9nxKcR8hQ0o</div>
 <div class="hv sel" style="left:381px;top:754.0px;height:20px;line-height:20px;font-size:12.8px;color:#1f2a44">hnT1JvqDI=;</div>
 <div class="hv sel" style="left:381px;top:774.0px;height:20px;line-height:20px;font-size:12.8px;color:#1f2a44">BAIDUID_BFESS=0B681F</div>
 <div class="hv sel" style="left:381px;top:794.0px;height:20px;line-height:20px;font-size:12.8px;color:#1f2a44">AD756CD17F7E2DF6E10</div>
 <div class="hv sel" style="left:381px;top:814.0px;height:20px;line-height:20px;font-size:12.8px;color:#1f2a44">04DF999:FG=1;</div>
 <div class="hv sel" style="left:381px;top:834.0px;height:20px;line-height:20px;font-size:12.8px;color:#1f2a44">BIDUPSID=0B681FAD75</div>
 <div class="hv sel" style="left:381px;top:854.0px;height:20px;line-height:20px;font-size:12.8px;color:#1f2a44">6CD17F7E2DF6E1004DF</div>
 <div class="hv sel" style="left:381px;top:874.0px;height:20px;line-height:20px;font-size:12.8px;color:#1f2a44">999; PSTM=1727567935;</div>
 <div class="a" style="left:538px;top:330px;width:15px;height:560px;background:#f1f1f1"></div>
 <svg class="a" style="left:542px;top:337px" width="8" height="5" viewBox="0 0 8 5"><path d="M0 5h8L4 0z" fill="#505050"/></svg>
 <div class="a" style="left:540px;top:446px;width:13px;height:61px;background:#c1c1c1"></div>
 <svg class="a" style="left:542px;top:880px" width="8" height="5" viewBox="0 0 8 5"><path d="M0 0h8L4 5z" fill="#505050"/></svg>
</div>

<!-- ===== OVERLAYS ===== -->
<!-- avatar -->
<svg class="a" style="left:1139px;top:608px" width="52" height="52" viewBox="0 0 52 52">
 <defs><clipPath id="cc"><circle cx="26" cy="26" r="23.5"/></clipPath></defs>
 <circle cx="26" cy="26" r="24.5" fill="#fff"/>
 <g clip-path="url(#cc)">
  <path d="M8 22c3-8 10-11 18-11s15 3 18 11" fill="none" stroke="#f0e2e6" stroke-width="2"/>
  <path d="M10 52V28c0-10 7-17 16-17s16 7 16 17v24z" fill="#babdc4"/>
  <ellipse cx="21" cy="23" rx="4.2" ry="4.6" fill="#f4f4f6"/>
  <ellipse cx="31" cy="23" rx="4.2" ry="4.6" fill="#f4f4f6"/>
  <circle cx="22" cy="23.5" r="1.8" fill="#555a63"/>
  <path d="M28.5 23.5h4.5" stroke="#555a63" stroke-width="1.6"/>
  <ellipse cx="26" cy="31.5" rx="11" ry="3.2" fill="#f6f6f8"/>
  <path d="M6 35h40v6H6z" fill="#a3a7af"/>
  <path d="M15 40h6v12h-6z" fill="#a3a7af"/>
 </g>
 <circle cx="26" cy="26" r="24" fill="none" stroke="#3d8ee8" stroke-width="2"/>
</svg>
<!-- red arrow -->
<svg class="a" style="left:1085px;top:710px" width="95" height="195" viewBox="1085 710 95 195"><path d="M1092.5 901L1161.7 731.1L1158.7 728.5L1171.5 717.5L1172.7 735.6L1168.2 734.7z" fill="#f0302f"/></svg>
<!-- green popup -->
<div class="a" style="left:1269px;top:807px;width:94px;height:37px;border-radius:5px;background:#27c466"></div>
<div class="a" style="left:1359px;top:821px;width:7px;height:7px;background:#27c466;transform:rotate(45deg)"></div>
<div class="a nw" style="left:1281px;top:817px;font-size:12.5px;color:#fff;letter-spacing:-0.6px">点我加速！</div>
<svg class="a" style="left:1344px;top:820px" width="10" height="10" viewBox="0 0 10 10"><path d="M1 1L9 9M9 1L1 9" stroke="#fff" stroke-width="1.3"/></svg>
<div class="a" style="left:1375px;top:798px;width:8px;height:58px;border-radius:4px 0 0 4px;background:linear-gradient(90deg,#f36b3c,#ee4a26 60%,#f8d6c8)"></div>

<!-- ===== TASKBAR ===== -->
<div class="a" style="left:0;top:978.5px;width:1383px;height:32px;background:linear-gradient(90deg,#d6dff4,#dae2f4 50%,#dee5f3);border-top:1px solid #b9bfca"></div>
<svg class="a" style="left:991px;top:998px" width="14" height="9" viewBox="0 0 14 9"><path d="M1 8L7 2l6 6" fill="none" stroke="#1a1a1a" stroke-width="1.5"/></svg>
<svg class="a" style="left:1012px;top:994px" width="18" height="16" viewBox="0 0 18 16"><ellipse cx="8" cy="6.5" rx="6.5" ry="5.5" fill="#2dc15a"/><path d="M4 10.5l-1 3 3.5-2z" fill="#2dc15a"/><ellipse cx="13" cy="11" rx="4" ry="3.3" fill="#e8f3ea"/><circle cx="6" cy="5.5" r="0.9" fill="#1b7a37"/><circle cx="10" cy="5.5" r="0.9" fill="#1b7a37"/></svg>
<svg class="a" style="left:1037px;top:994px" width="18" height="16" viewBox="0 0 18 16"><circle cx="9" cy="9" r="8" fill="#3aa93a"/><path d="M2 6c4-2 9-3 14-1v5c-5-2-10-1-14 1z" fill="#f1e23a"/><path d="M9 4.5v9M4.5 9h9" stroke="#1f6e23" stroke-width="2.2"/><circle cx="13.5" cy="13" r="2.2" fill="#e9f7ea"/></svg>
<svg class="a" style="left:1062px;top:994px" width="17" height="16" viewBox="0 0 17 16"><circle cx="8.5" cy="8.8" r="7.4" fill="#f7d54a" stroke="#1a1a1a" stroke-width="1.8"/><path d="M3 11c2 3 9 3 11 0v3H3z" fill="#f27c5a"/><path d="M11.5 6.5a3.5 3.5 0 10 .3 4" fill="none" stroke="#3a2010" stroke-width="1.6"/></svg>
<svg class="a" style="left:1085px;top:994px" width="17" height="16" viewBox="0 0 17 16"><path d="M8.5 0.5c3.5 0 5 2.5 5 5.5 0 1.5.5 2.5 1.5 4.5l-1.5 1 .5 4.5h-11l.5-4.5L2 10.5c1-2 1.5-3 1.5-4.5 0-3 1.5-5.5 5-5.5z" fill="#111"/><ellipse cx="8.5" cy="12.5" rx="4" ry="3.5" fill="#fff"/><path d="M3 8.5h11v2.5H3z" fill="#e8242b"/><ellipse cx="7" cy="4.5" rx="1" ry="1.4" fill="#fff"/><ellipse cx="10" cy="4.5" rx="1" ry="1.4" fill="#fff"/><ellipse cx="8.5" cy="7" rx="2" ry="1" fill="#f5b41c"/></svg>
<div class="a nw" style="left:1115px;top:993px;font-size:15px;color:#f4f6fa;-webkit-text-stroke:0.8px #5f636a">中</div>
<div class="a" style="left:1152px;top:995px;width:16px;height:16px;border-radius:3px;background:#2a7de1"></div>
<div class="a" style="left:1155px;top:998px;width:9px;height:9px;border-radius:50%;border:2px solid #fff"></div><div class="a" style="left:1161px;top:1005px;width:4px;height:2px;background:#fff;transform:rotate(40deg)"></div>
<svg class="a" style="left:1189px;top:994px" width="18" height="16" viewBox="0 0 18 16"><path d="M11 1H1.5v10h7M5 11v5" fill="none" stroke="#1f1f1f" stroke-width="1.3"/><rect x="12" y="0.7" width="4" height="7" rx="2" fill="none" stroke="#1f1f1f" stroke-width="1.2"/><path d="M14 8v8" stroke="#1f1f1f" stroke-width="1.2"/></svg>
<svg class="a" style="left:1213px;top:994px" width="17" height="16" viewBox="0 0 17 16"><path d="M1 5.5h3l4-4v13l-4-4H1z" fill="none" stroke="#1f1f1f" stroke-width="1.2"/><path d="M11 5a4 4 0 010 6M13.5 3a7 7 0 010 10" fill="none" stroke="#9aa0a8" stroke-width="1.1"/></svg>
<div class="a nw" style="left:1314px;top:988px;font-size:12px;color:#1f1f1f">16:05</div>
<div class="a nw" style="left:1247px;top:1004px;font-size:12px;color:#1f1f1f">2024/11/10 星期日</div>
<div class="a" style="left:1348px;top:994px;width:17px;height:17px;border-radius:50%;background:#0c5fc4;color:#fff;font-size:11px;line-height:17px;text-align:center">1</div>

</body></html>
